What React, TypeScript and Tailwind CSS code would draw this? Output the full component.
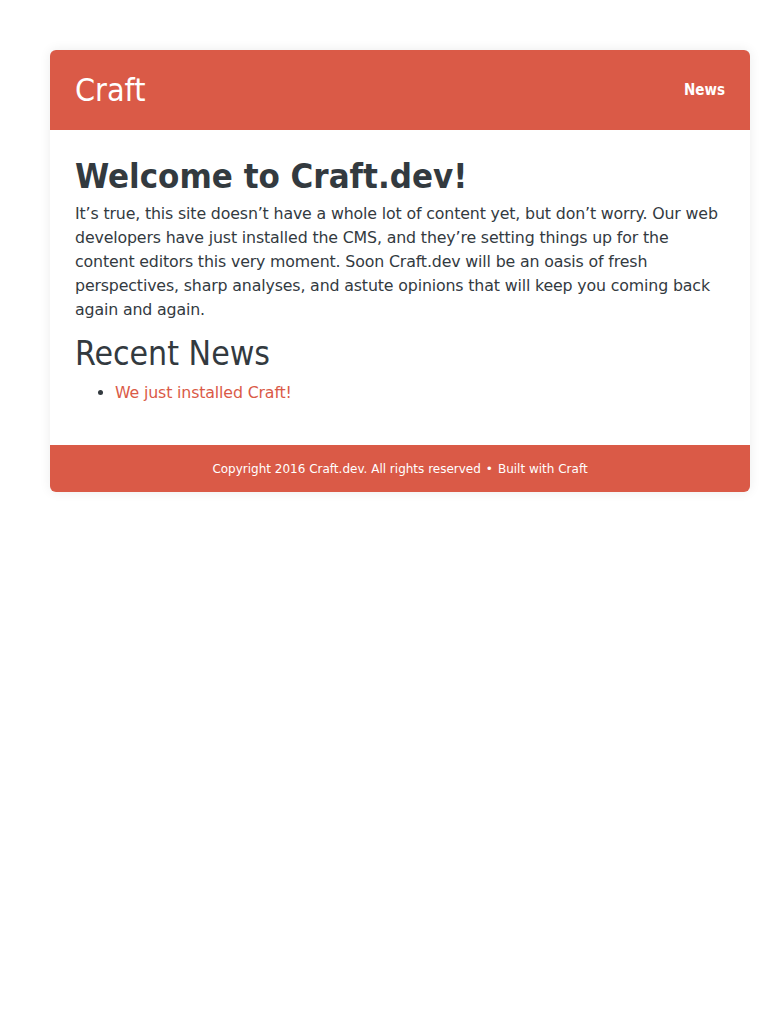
export default function App() {
  return (
    <div className="min-h-[1024px] bg-white pt-[50px] px-[50px]" style={{ fontFamily: '"DejaVu Sans", sans-serif' }}>
      <div className="w-[700px] rounded-[6px] bg-white shadow-[0_0_12px_rgba(0,0,0,0.08)] overflow-hidden">
        <header className="h-[80px] bg-[#da5a47] flex items-center justify-between px-[25px] font-['DejaVu_Sans_Condensed','DejaVu_Sans',sans-serif]">
          <span className="text-white text-[32px] leading-none">Craft</span>
          <a className="text-white text-[15px] font-bold">News</a>
        </header>
        <main className="px-[25px] pt-[24px] pb-[40px] text-[#333a3f]">
          <h1 className="text-[34.5px] font-bold leading-[44px] font-['DejaVu_Sans_Condensed','DejaVu_Sans',sans-serif]">Welcome to Craft.dev!</h1>
          <p className="text-[15.8px] leading-[24px] mt-[4px] tracking-[-0.15px]">
            It’s true, this site doesn’t have a whole lot of content yet, but don’t worry. Our web developers have just installed the CMS, and they’re setting things up for the content editors this very moment. Soon Craft.dev will be an oasis of fresh perspectives, sharp analyses, and astute opinions that will keep you coming back again and again.
          </p>
          <h2 className="text-[33.5px] leading-[40px] mt-[12px] font-['DejaVu_Sans_Condensed','DejaVu_Sans',sans-serif]">Recent News</h2>
          <ul className="list-disc pl-[40px] mt-[7px] text-[15.8px] leading-[24px] tracking-[-0.15px]">
            <li><a className="text-[#da5a47]">We just installed Craft!</a></li>
          </ul>
        </main>
        <footer className="h-[47px] bg-[#da5a47] flex items-center justify-center text-white text-[12px]">
          Copyright 2016 Craft.dev. All rights reserved
          <span className="mx-[5px]">•</span>
          Built with Craft
        </footer>
      </div>
    </div>
  );
}
